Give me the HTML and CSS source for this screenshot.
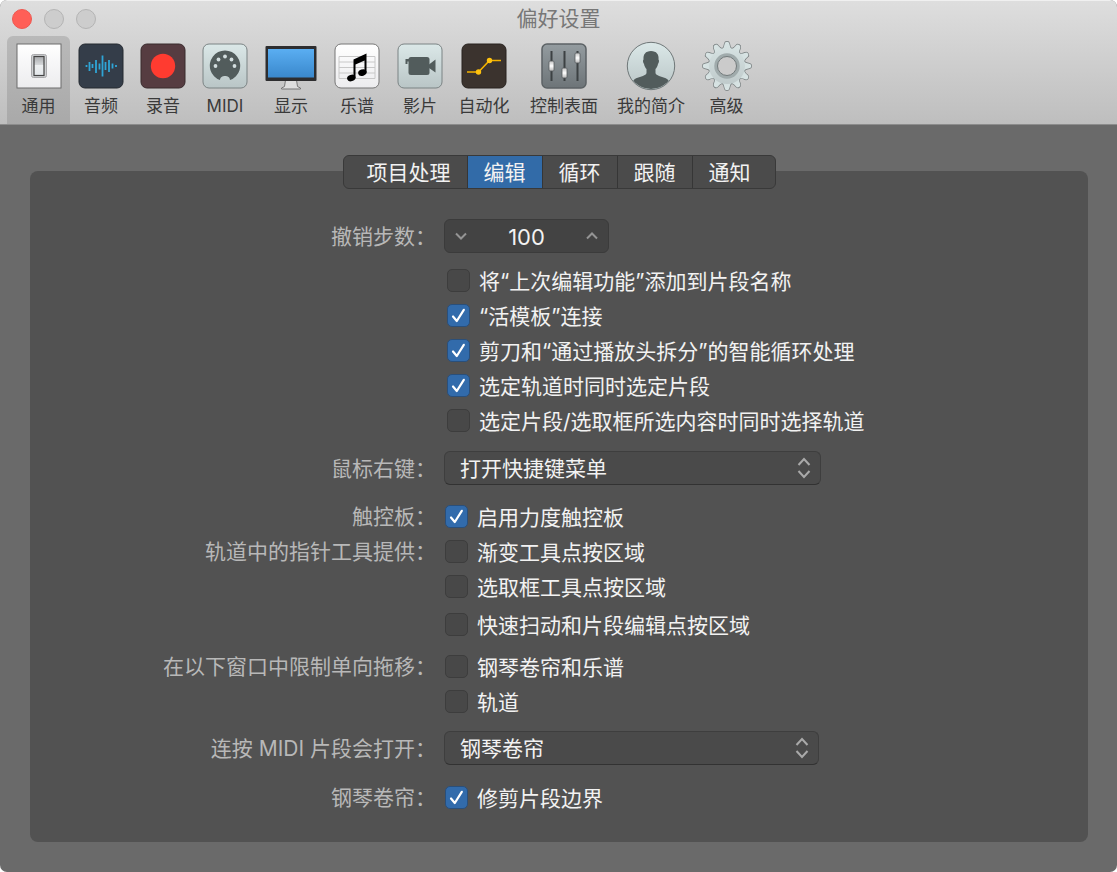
FILE: index.html
```html
<!DOCTYPE html>
<html lang="zh-CN">
<head>
<meta charset="utf-8">
<title>偏好设置</title>
<link rel="stylesheet" href="styles.css">
</head>
<body>
<svg class="defs" aria-hidden="true">
  <defs>
    <linearGradient id="pale" x1="0" y1="0" x2="0" y2="1"><stop offset="0" stop-color="#dbe8e8"/><stop offset="1" stop-color="#b9c5c6"/></linearGradient>
    <linearGradient id="paper" x1="0" y1="0" x2="0" y2="1"><stop offset="0" stop-color="#ffffff"/><stop offset="1" stop-color="#ececee"/></linearGradient>
    <linearGradient id="screen" x1="0" y1="0" x2="0" y2="1"><stop offset="0" stop-color="#5aaef2"/><stop offset="1" stop-color="#3a88cc"/></linearGradient>
    <linearGradient id="slate" x1="0" y1="0" x2="0" y2="1"><stop offset="0" stop-color="#949ca0"/><stop offset="1" stop-color="#6d7478"/></linearGradient>
    <linearGradient id="metal" x1="0" y1="0" x2="0" y2="1"><stop offset="0" stop-color="#c2c2c2"/><stop offset="0.5" stop-color="#ffffff"/><stop offset="1" stop-color="#b5b5b5"/></linearGradient>
    <linearGradient id="rocker" x1="0" y1="0" x2="0" y2="1"><stop offset="0" stop-color="#a9abad"/><stop offset="0.42" stop-color="#d4d6d8"/><stop offset="0.46" stop-color="#eef0f1"/><stop offset="1" stop-color="#e3e7ea"/></linearGradient>
    <linearGradient id="gearfill" gradientUnits="userSpaceOnUse" x1="0" y1="-25" x2="0" y2="25"><stop offset="0" stop-color="#d9e5e5"/><stop offset="1" stop-color="#bbc6c7"/></linearGradient>
    <path id="tooth" d="M-4.500 -17 Q-2.800 -18.500 -2.300 -22.500 Q-2 -24.300 0 -24.300 Q2 -24.300 2.300 -22.500 Q2.800 -18.500 4.500 -17 Z"/>
    <g id="teeth">
      <use href="#tooth"/><use href="#tooth" transform="rotate(30)"/><use href="#tooth" transform="rotate(60)"/><use href="#tooth" transform="rotate(90)"/><use href="#tooth" transform="rotate(120)"/><use href="#tooth" transform="rotate(150)"/><use href="#tooth" transform="rotate(180)"/><use href="#tooth" transform="rotate(210)"/><use href="#tooth" transform="rotate(240)"/><use href="#tooth" transform="rotate(270)"/><use href="#tooth" transform="rotate(300)"/><use href="#tooth" transform="rotate(330)"/>
      <circle r="18"/>
    </g>
    <clipPath id="bust"><circle cx="25" cy="25" r="23"/></clipPath>
  </defs>
</svg>
<div class="window">
  <header class="header">
    <div class="titlebar">
      <div class="lights">
        <button class="light light-close" aria-label="关闭"></button>
        <button class="light" aria-label="最小化" disabled></button>
        <button class="light" aria-label="缩放" disabled></button>
      </div>
      <h1 class="title">偏好设置</h1>
    </div>
    <nav class="toolbar">
      <button class="tool tool-active">
        <svg class="icon" width="46" height="50" viewBox="0 0 46 50"><rect x="1" y="3" width="44" height="44" fill="url(#paper)" stroke="#6d6d6d"/><rect x="15.500" y="13.500" width="15" height="23" rx="2" fill="#cfd1d3" stroke="#a9a9ab"/><rect x="18" y="15.500" width="10" height="19" fill="url(#rocker)" stroke="#444" stroke-width="1.200"/></svg>
        <span>通用</span>
      </button>
      <button class="tool">
        <svg class="icon" width="46" height="50" viewBox="0 0 46 50"><rect x="1" y="3" width="44" height="44" rx="6" fill="#343d49" stroke="#252a31"/><path d="M8.500 24v2M11.500 21v9M14.500 23v4M18 19v13M21.500 22.500v6M24.500 14.500v21M27.500 21v8M31 19v12M34.500 22.500v5M38 24v2" stroke="#2fa5d6" stroke-width="1.800" fill="none"/></svg>
        <span>音频</span>
      </button>
      <button class="tool">
        <svg class="icon" width="46" height="50" viewBox="0 0 46 50"><rect x="1" y="3" width="44" height="44" rx="6" fill="#563c41" stroke="#392a2d"/><circle cx="23" cy="25" r="12.200" fill="#ff3b30"/></svg>
        <span>录音</span>
      </button>
      <button class="tool">
        <svg class="icon" width="46" height="50" viewBox="0 0 46 50"><rect x="1" y="3" width="44" height="44" rx="6" fill="url(#pale)" stroke="#7b8384"/><path d="M18 39A15.200 15.200 0 1 1 28 39C28 33.500 18 33.500 18 39Z" fill="#525c5c"/><g fill="#d3dedf"><circle cx="13.500" cy="25" r="1.900"/><circle cx="16.500" cy="18.500" r="1.900"/><circle cx="23" cy="15.500" r="1.900"/><circle cx="29.500" cy="18.500" r="1.900"/><circle cx="32.500" cy="25" r="1.900"/></g></svg>
        <span>MIDI</span>
      </button>
      <button class="tool tool-display">
        <svg class="icon" width="52" height="50" viewBox="0 0 52 50"><path d="M20.500 39h11l1 6.500 3 1.500v1h-19v-1l3-1.500Z" fill="#dedede" stroke="#777"/><rect x="0.500" y="5" width="51" height="35" rx="1" fill="#2d2d2f"/><rect x="3" y="8" width="46" height="28.500" fill="url(#screen)"/></svg>
        <span>显示</span>
      </button>
      <button class="tool">
        <svg class="icon" width="46" height="50" viewBox="0 0 46 50"><rect x="1" y="3" width="44" height="44" rx="6" fill="url(#paper)" stroke="#777"/><path d="M5 15.500h36M5 21h36M5 26.500h36M5 32h36M5 37.500h36M5 15.500v22M41 15.500v22" stroke="#c8c8c8" fill="none"/><path d="M19.500 18.500 32.500 12.500V31.500H30.500V19.500L21.500 23.500V37H19.500Z"/><ellipse cx="17.300" cy="37" rx="4.300" ry="3.200" transform="rotate(-18 17.300 37)"/><ellipse cx="28.400" cy="31.600" rx="4.300" ry="3.200" transform="rotate(-18 28.400 31.600)"/></svg>
        <span>乐谱</span>
      </button>
      <button class="tool tool-wide">
        <svg class="icon" width="46" height="50" viewBox="0 0 46 50"><rect x="1" y="3" width="44" height="44" rx="6" fill="url(#pale)" stroke="#7b8384"/><rect x="11.500" y="16" width="21" height="18" rx="2.500" fill="#525c5c"/><path d="M8.500 18h4v2.500h-2V23h-2ZM32 23.500 38.500 18.500v13L32 27Z" fill="#525c5c"/></svg>
        <span>影片</span>
      </button>
      <button class="tool tool-wide">
        <svg class="icon" width="46" height="50" viewBox="0 0 46 50"><rect x="1" y="3" width="44" height="44" rx="6" fill="#3b332e" stroke="#28231f"/><path d="M6 31h11.500L28.500 19.500H40" fill="none" stroke="#f5b400" stroke-width="1.600"/><circle cx="17.500" cy="31" r="2.700" fill="#ffc20e"/><circle cx="28.500" cy="19.500" r="2.700" fill="#ffc20e"/></svg>
        <span>自动化</span>
      </button>
      <button class="tool tool-surface">
        <svg class="icon" width="46" height="50" viewBox="0 0 46 50"><rect x="1" y="3" width="44" height="44" rx="5" fill="url(#slate)" stroke="#5c6265" stroke-width="1.500"/><path d="M10.500 10v30M23.500 10v30M36.500 10v30" stroke="#3c4143" stroke-width="2"/><g fill="url(#metal)" stroke="#555b5e" stroke-width="0.800"><rect x="8" y="20" width="5" height="10" rx="1"/><rect x="21" y="27" width="5" height="10" rx="1"/><rect x="34" y="12" width="5" height="10" rx="1"/></g></svg>
        <span>控制表面</span>
      </button>
      <button class="tool tool-profile">
        <svg class="icon" width="50" height="50" viewBox="0 0 50 50"><circle cx="25" cy="25" r="23.700" fill="url(#pale)" stroke="#6f7778"/><path clip-path="url(#bust)" d="M25 10c5.500 0 8 3.500 7.500 8.500.8.500.6 3-.5 4.500-.5 2.500-1.500 4-2.500 5v4c0 3.500 11 3.500 13.500 8-4 5-10 8-18 8s-14-3-18-8c2.500-4.500 13.500-4.500 13.500-8v-4c-1-1-2-2.500-2.500-5-1.100-1.500-1.300-4-.5-4.500C17 13.500 19.500 10 25 10Z" fill="#525c5c"/></svg>
        <span>我的简介</span>
      </button>
      <button class="tool tool-advanced">
        <svg class="icon" width="52" height="50" viewBox="-26 -25 52 50"><use href="#teeth" fill="none" stroke="#747b7c" stroke-width="1.400"/><use href="#teeth" fill="url(#gearfill)"/><circle r="11" fill="none" stroke="#a0abac" stroke-width="3.500"/><circle r="9.500" fill="#cbcbcb" stroke="#727a7b" stroke-width="1"/></svg>
        <span>高级</span>
      </button>
    </nav>
  </header>

  <main class="content">
    <div class="tabs" role="tablist">
      <button class="tab" role="tab" aria-selected="false">项目处理</button>
      <button class="tab tab-active" role="tab" aria-selected="true">编辑</button>
      <button class="tab" role="tab" aria-selected="false">循环</button>
      <button class="tab" role="tab" aria-selected="false">跟随</button>
      <button class="tab" role="tab" aria-selected="false">通知</button>
    </div>
    <form class="panel">
      <div class="row row-undo">
        <label class="label" for="undo">撤销步数：</label>
        <div class="stepper">
          <button type="button" class="step" aria-label="减少"><svg width="12" height="8" viewBox="0 0 12 8"><path d="M1 1.500 6 6.500 11 1.500"/></svg></button>
          <input class="step-value" id="undo" type="text" value="100">
          <button type="button" class="step" aria-label="增加"><svg width="12" height="8" viewBox="0 0 12 8"><path d="M1 6.500 6 1.500 11 6.500"/></svg></button>
        </div>
      </div>
      <div class="row row-options">
        <div class="checks checks-inset">
          <label class="check"><input type="checkbox"><span>将“上次编辑功能”添加到片段名称</span></label>
          <label class="check"><input type="checkbox" checked><span>“活模板”连接</span></label>
          <label class="check"><input type="checkbox" checked><span>剪刀和“通过播放头拆分”的智能循环处理</span></label>
          <label class="check"><input type="checkbox" checked><span>选定轨道时同时选定片段</span></label>
          <label class="check"><input type="checkbox"><span>选定片段/选取框所选内容时同时选择轨道</span></label>
        </div>
      </div>
      <div class="row row-mouse">
        <label class="label" for="mouse">鼠标右键：</label>
        <div class="popup">
          <select id="mouse"><option>打开快捷键菜单</option></select>
          <svg class="arrows" width="14" height="22" viewBox="0 0 14 22"><path d="M1.500 8 7 2 12.500 8M1.500 14 7 20 12.500 14"/></svg>
        </div>
      </div>
      <div class="row row-trackpad">
        <div class="label">触控板：</div>
        <div class="checks">
          <label class="check"><input type="checkbox" checked><span>启用力度触控板</span></label>
        </div>
      </div>
      <div class="row">
        <div class="label">轨道中的指针工具提供：</div>
        <div class="checks">
          <label class="check"><input type="checkbox"><span>渐变工具点按区域</span></label>
          <label class="check"><input type="checkbox"><span>选取框工具点按区域</span></label>
          <label class="check check-apart"><input type="checkbox"><span>快速扫动和片段编辑点按区域</span></label>
        </div>
      </div>
      <div class="row row-limit">
        <div class="label">在以下窗口中限制单向拖移：</div>
        <div class="checks">
          <label class="check"><input type="checkbox"><span>钢琴卷帘和乐谱</span></label>
          <label class="check"><input type="checkbox"><span>轨道</span></label>
        </div>
      </div>
      <div class="row row-open">
        <label class="label" for="open">连按 MIDI 片段会打开：</label>
        <div class="popup">
          <select id="open"><option>钢琴卷帘</option></select>
          <svg class="arrows" width="14" height="22" viewBox="0 0 14 22"><path d="M1.500 8 7 2 12.500 8M1.500 14 7 20 12.500 14"/></svg>
        </div>
      </div>
      <div class="row row-roll">
        <div class="label">钢琴卷帘：</div>
        <div class="checks">
          <label class="check"><input type="checkbox" checked><span>修剪片段边界</span></label>
        </div>
      </div>
    </form>
  </main>
</div>
</body>
</html>
```
FILE: styles.css
```css
* {
  box-sizing: border-box;
}

body {
  margin: 0;
  background: #fff;
  font-family: Inter, "Noto Sans CJK SC", sans-serif;
  font-size: 21px;
  color: #f2f2f2;
}

button,
input,
select {
  margin: 0;
  padding: 0;
  border: 0;
  background: none;
  font: inherit;
  color: inherit;
}

.defs {
  position: absolute;
  width: 0;
  height: 0;
}

.window {
  display: flex;
  flex-direction: column;
  min-height: 100vh;
  border-radius: 7px;
  overflow: hidden;
  background: #6a6a6a;
}

/* Title bar and toolbar */
.header {
  padding-top: 1px;
  background: linear-gradient(#dedede, #bebebe);
  border-top: 1px solid #f0f0f0;
  border-bottom: 1px solid #8c8c8c;
}

.titlebar {
  display: grid;
  grid-template-columns: 1fr auto 1fr;
  align-items: center;
  height: 34px;
  padding: 0 12px;
}

.lights {
  display: flex;
  gap: 12px;
}

.light {
  width: 20px;
  height: 20px;
  border: 1px solid #b4b4b4;
  border-radius: 50%;
  background: #cdcdcd;
}

.light-close {
  border-color: #ee5850;
  background: #ff5f57;
}

.title {
  margin: 0;
  font-size: 21px;
  font-weight: 400;
  line-height: 34px;
  color: #777;
}

.toolbar {
  display: flex;
  padding-left: 7px;
}

.tool {
  display: flex;
  flex-direction: column;
  align-items: center;
  width: 62px;
  height: 88px;
  padding-top: 5px;
  font-size: 17px;
  line-height: 31px;
  white-space: nowrap;
  color: #3a3a3a;
}

.tool-active {
  width: 63px;
  border-radius: 6px 6px 0 0;
  background: linear-gradient(#b9b9b9, #a9a9a9);
}

.tool-wide {
  width: 64px;
}

.tool-display {
  width: 70px;
}

.tool-surface {
  width: 96px;
}

.tool-profile {
  width: 78px;
}

.tool-advanced {
  width: 73px;
}

/* Tabs overlap the top edge of the panel */
.content {
  display: flex;
  flex: 1;
  flex-direction: column;
  padding: 30px 29px 30px 30px;
}

.tabs {
  z-index: 1;
  display: flex;
  align-self: center;
  height: 34px;
  margin-bottom: -18px;
  border: 1px solid #393939;
  border-radius: 6px;
  overflow: hidden;
  background: #4b4b4b;
}

.tab {
  padding: 2px 16px 0;
  line-height: 30px;
  border-left: 1px solid #363636;
}

.tab:first-child {
  padding-left: 23px;
  border-left: 0;
}

.tab:last-child {
  padding-right: 24px;
}

.tab-active {
  background: #326ba8;
}

.panel {
  flex: 1;
  padding: 48px 0 26px;
  border-radius: 8px;
  background: #525252;
}

.row {
  display: grid;
  grid-template-columns: minmax(0, 406fr) minmax(0, 644fr);
  column-gap: 8px;
}

.row > :last-child {
  grid-column: 2;
}

.row-options {
  margin-top: 10px;
}

.row-mouse {
  margin-top: 13px;
}

.row-trackpad {
  margin-top: 14px;
}

.row-limit {
  margin-top: 7px;
}

.row-open {
  margin-top: 12px;
}

.row-roll {
  margin-top: 15px;
}

.label {
  height: 34px;
  line-height: 36px;
  text-align: right;
  white-space: nowrap;
  color: #b8b8b8;
}

/* Number stepper */
.stepper {
  display: flex;
  width: 165px;
  height: 34px;
  border: 1px solid #3b3b3b;
  border-radius: 6px;
  background: #434343;
}

.step {
  display: grid;
  place-items: center;
  width: 32px;
}

.step svg,
.arrows {
  fill: none;
  stroke: #a9a9a9;
  stroke-width: 2;
}

.step svg {
  stroke: #949494;
}

.step-value {
  flex: 1;
  min-width: 0;
  padding-top: 1px;
  text-align: center;
  font-size: 22px;
}

/* Checkboxes */
.checks {
  padding-left: 1px;
}

.checks-inset {
  padding-left: 3px;
}

.check {
  display: flex;
  align-items: center;
  gap: 9px;
  height: 35px;
  line-height: 30px;
  white-space: nowrap;
}

.check span {
  padding-top: 2px;
}

.check-apart {
  margin-top: 3px;
}

.check input {
  flex: none;
  appearance: none;
  width: 23px;
  height: 23px;
  border: 1px solid #3d3d3d;
  border-radius: 5px;
  background: #484848;
}

.check input:checked {
  border-color: #2a4f7a;
  background: #326bab url("data:image/svg+xml,%3Csvg xmlns='http://www.w3.org/2000/svg' viewBox='0 0 21 21'%3E%3Cpath d='M5 11.500 8.800 16 15.800 4.800' fill='none' stroke='white' stroke-width='2.200' stroke-linecap='round' stroke-linejoin='round'/%3E%3C/svg%3E");
}

/* Pop-up menus */
.popup {
  position: relative;
  width: 377px;
  height: 34px;
}

.row-open .popup {
  width: 375px;
}

.popup select {
  appearance: none;
  width: 100%;
  height: 34px;
  padding: 0 15px;
  border: 1px solid #3e3e3e;
  border-bottom-color: #323232;
  border-radius: 6px;
  background: #4a4a4a;
}

.arrows {
  position: absolute;
  top: 6px;
  right: 10px;
  pointer-events: none;
}
```
